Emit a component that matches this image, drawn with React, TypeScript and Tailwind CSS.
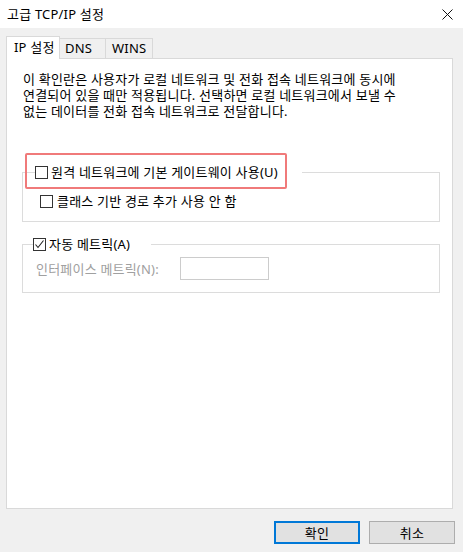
import React from "react";

const font = { fontFamily: '"Noto Sans", "Noto Sans CJK KR", sans-serif' };

const Box = ({ checked = false }: { checked?: boolean }) => (
  <span className="flex h-[13px] w-[13px] shrink-0 items-center justify-center border border-[#333333] bg-white">
    {checked && (
      <svg width="11" height="11" viewBox="0 0 11 11">
        <polyline points="1.5,5.5 4,8.5 9.5,1.5" fill="none" stroke="#222" strokeWidth="1.1" />
      </svg>
    )}
  </span>
);

export default function App() {
  return (
    <div
      className="relative flex h-[552px] w-[463px] flex-col overflow-hidden bg-[#f0f0f0] text-[13px] tracking-[0.2px] text-black"
      style={font}
    >
      <div className="flex h-[28px] items-center justify-between bg-white pl-[7px] pr-[10px]">
        <span className="leading-[16px]">고급 TCP/IP 설정</span>
        <svg width="11" height="11" viewBox="0 0 11 11">
          <path d="M0.5 0.5 L10.5 10.5 M10.5 0.5 L0.5 10.5" stroke="#111" strokeWidth="1" />
        </svg>
      </div>

      <div className="ml-[6px] mt-[8px] flex h-[22px] items-end">
        <div className="relative z-10 -mb-px flex h-[23px] w-[54px] items-start border border-b-0 border-[#d9d9d9] bg-white pl-[7px] pt-[2px] leading-[16px]">
          IP 설정
        </div>
        <div className="flex h-[20px] w-[46px] items-start border-r border-t border-[#d9d9d9] pl-[5px] pt-[1px] leading-[16px]">
          DNS
        </div>
        <div className="flex h-[20px] w-[47px] items-start border-r border-t border-[#d9d9d9] pl-[6px] pt-[1px] leading-[16px]">
          WINS
        </div>
      </div>

      <div className="ml-[6px] flex h-[451px] w-[447px] flex-col border border-[#d9d9d9] bg-white pl-[15px] pt-[12px]">
        <p className="pl-px leading-[16px] whitespace-nowrap">
          이 확인란은 사용자가 로컬 네트워크 및 전화 접속 네트워크에 동시에
          <br />
          연결되어 있을 때만 적용됩니다. 선택하면 로컬 네트워크에서 보낼 수
          <br />
          없는 데이터를 전화 접속 네트워크로 전달합니다.
        </p>

        <fieldset className="mt-[45px] w-[418px] border border-[#dcdcdc] pb-[12px]">
          <legend className="ml-[12px] flex h-[16px] items-center gap-[3px] pr-[24px] leading-[16px]">
            <Box />
            <span>원격 네트워크에 기본 게이트웨이 사용(U)</span>
          </legend>
          <div className="ml-[17px] mt-[13px] flex h-[16px] items-center gap-[4px] leading-[16px]">
            <Box />
            <span>클래스 기반 경로 추가 사용 안 함</span>
          </div>
        </fieldset>

        <fieldset className="mt-[14px] w-[418px] border border-[#dcdcdc] pb-[12px]">
          <legend className="ml-[10px] flex h-[16px] items-center gap-[3px] pr-[21px] leading-[16px]">
            <Box checked />
            <span>자동 메트릭(A)</span>
          </legend>
          <div className="ml-[13px] mt-[5px] flex h-[23px] items-center text-[#a0a0a0]">
            <span className="w-[144px] leading-[16px]">인터페이스 메트릭(N):</span>
            <span className="h-[23px] w-[89px] border border-[#cccccc] bg-white" />
          </div>
        </fieldset>
      </div>

      <div className="mr-[8px] mt-[12px] flex justify-end gap-[9px]">
        <button className="h-[23px] w-[86px] border-2 border-[#0078d7] bg-[#e1e1e1] leading-[16px]">
          확인
        </button>
        <button className="h-[23px] w-[86px] border border-[#adadad] bg-[#e1e1e1] leading-[16px]">
          취소
        </button>
      </div>

      <div className="absolute left-[25px] top-[153px] h-[36px] w-[262px] rounded-[2px] border-2 border-[#f07a7a]" />
    </div>
  );
}
